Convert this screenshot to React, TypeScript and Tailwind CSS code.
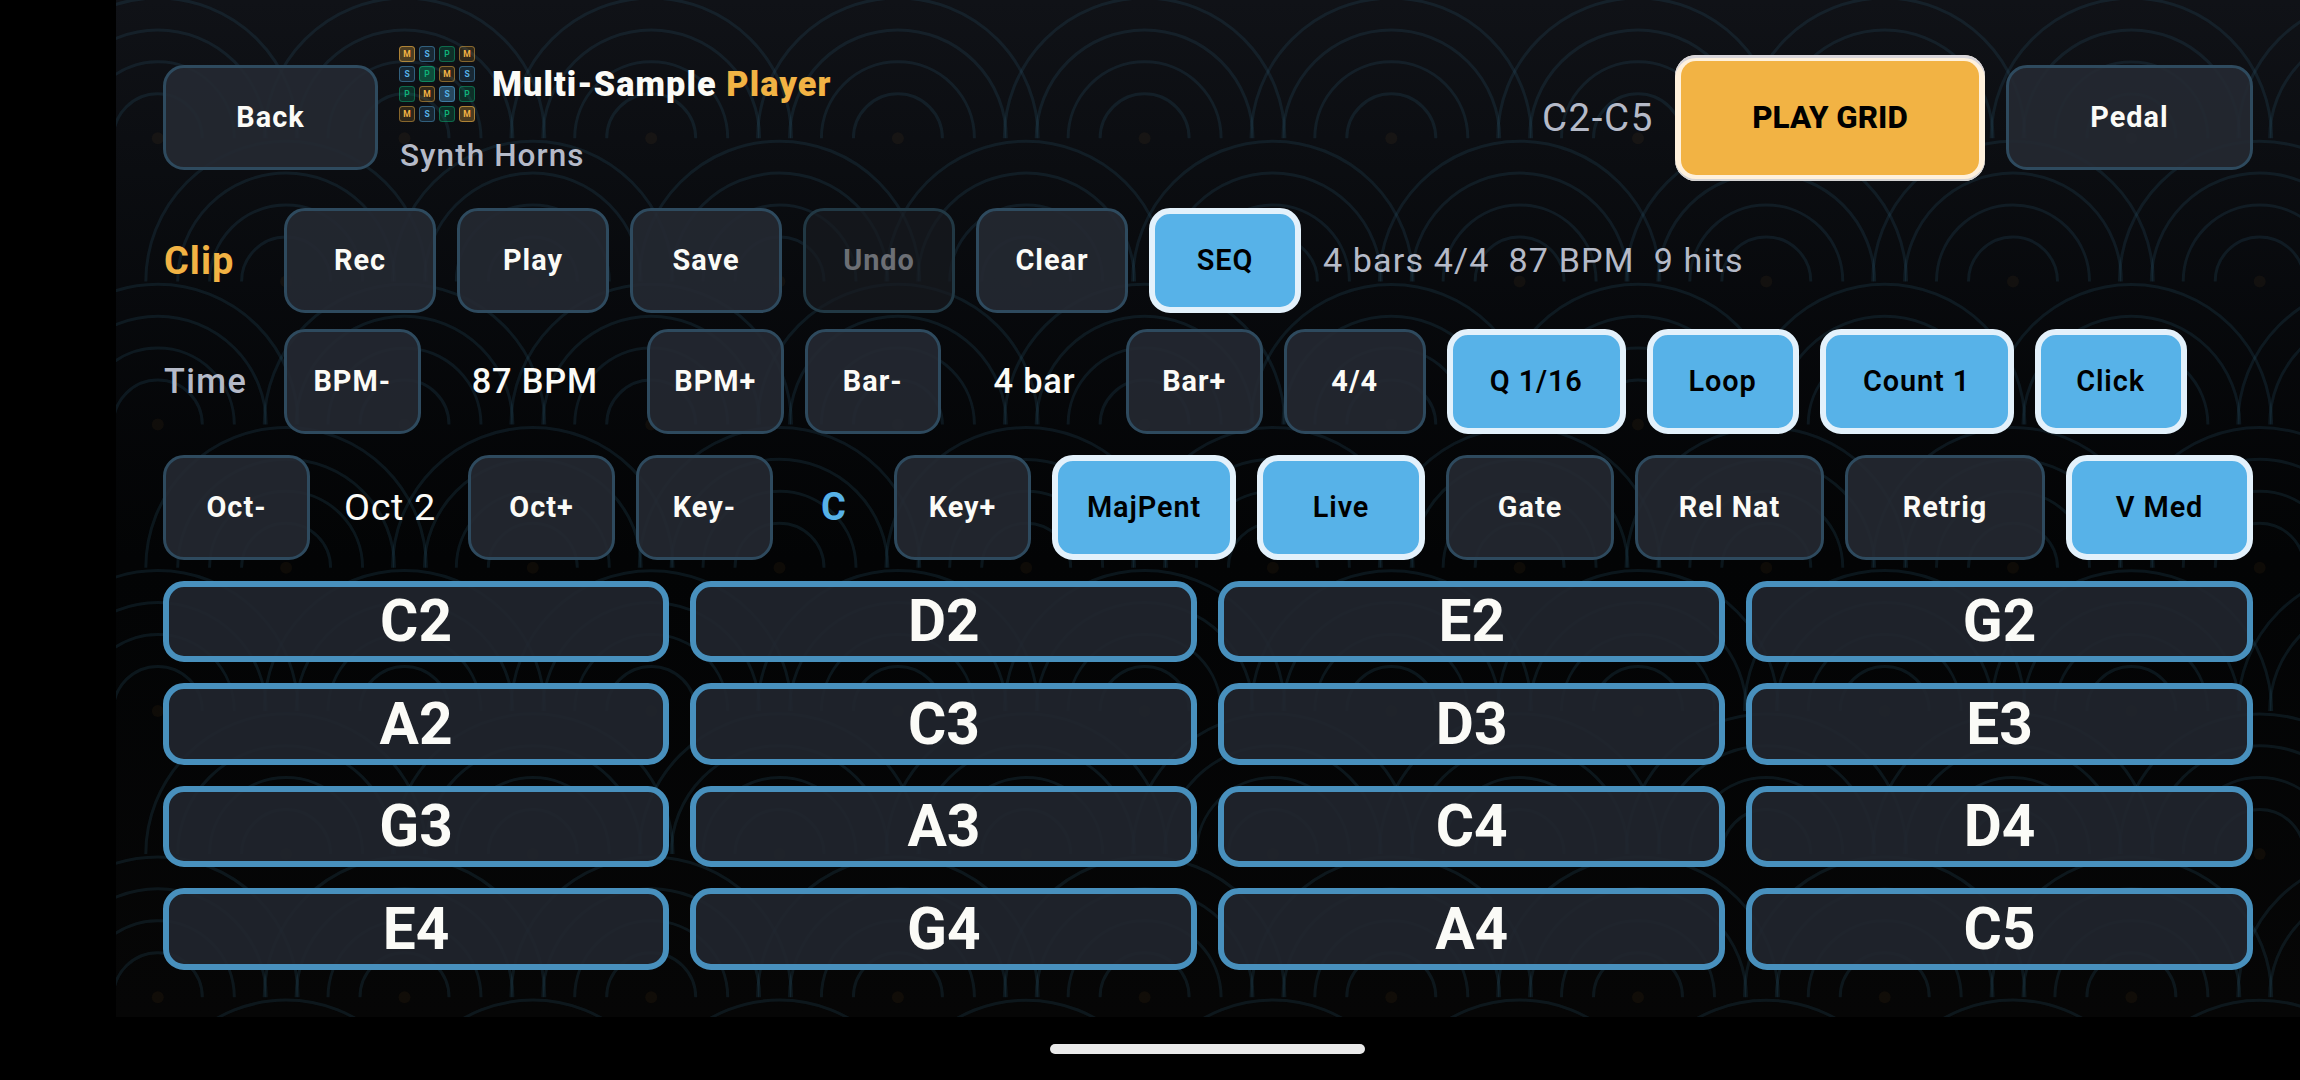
import React from "react";
import clsx from "clsx";

type Variant = "default" | "active" | "disabled";

interface PadButtonProps {
  label: string;
  width: string;
  variant?: Variant;
}

const variantClasses: Record<Variant, string> = {
  default:
    "border-[3px] border-[#2e4a5e] bg-[#252932]/90 font-bold tracking-[1px] text-[#fbfbf7]",
  active:
    "border-[6px] border-[#e3f1fb] bg-[#57b2e8] font-semibold tracking-[0.9px] text-black",
  disabled:
    "border-[3px] border-[#213844] bg-[#181b21]/70 font-bold tracking-[1px] text-[#6c6f75]",
};

const PadButton: React.FC<PadButtonProps> = ({
  label,
  width,
  variant = "default",
}) => (
  <button
    className={clsx(
      "flex h-[105px] shrink-0 items-center justify-center rounded-[21px] pt-px text-[28.875px] whitespace-nowrap",
      width,
      variantClasses[variant]
    )}
  >
    {label}
  </button>
);

// Background wave pattern: staggered rows of half circles with a dot in the middle
const ROW_HEIGHT = 143.15;
const COL_WIDTH = 246.7;
const RADII = [44.5, 76.5, 108.4, 140.3];

const WavePattern: React.FC = () => {
  const centers: { x: number; y: number }[] = [];
  for (let row = 0; row < 8; row++) {
    const offset = row % 2 === 0 ? 41.8 : 170.1;
    for (let col = 0; col < 10; col++) {
      centers.push({ x: offset + col * COL_WIDTH, y: 138.3 + row * ROW_HEIGHT });
    }
  }

  return (
    <svg
      className="absolute inset-0"
      width="2184"
      height="1017"
      viewBox="0 0 2184 1017"
      fill="none"
    >
      {centers.map(({ x, y }) => (
        <g key={`${x}-${y}`}>
          {RADII.map((r) => (
            <path
              key={r}
              d={`M${x - r} ${y}A${r} ${r} 0 0 1 ${x + r} ${y}`}
              stroke="#2f6078"
              strokeOpacity="0.2"
              strokeWidth="3"
            />
          ))}
          <circle cx={x} cy={y} r="6" fill="#f2a044" fillOpacity="0.05" />
        </g>
      ))}
    </svg>
  );
};

const tileClasses: Record<string, string> = {
  M: "border-[#f2b344]/45 bg-[#f2b344]/15 text-[#f2b344]",
  S: "border-[#57b2e8]/40 bg-[#57b2e8]/15 text-[#57b2e8]",
  P: "border-[#10b178]/45 bg-[#10b178]/20 text-[#10b178]",
};

const brightTileClasses: Record<string, string> = {
  M: "border-[#f2b344]/60 bg-[#f2b344]/28 text-[#f2b344]",
  S: "border-[#57b2e8]/50 bg-[#57b2e8]/35 text-[#57b2e8]",
  P: "border-[#10b178]/60 bg-[#10b178]/38 text-[#10b178]",
};

const LOGO_TILES = ["MSPM", "SPMS", "PMSP", "MSPM"];

const Logo: React.FC = () => (
  <div className="grid grid-cols-4 gap-1">
    {LOGO_TILES.map((line, row) =>
      line.split("").map((letter, col) => (
        <span
          key={`${row}-${col}`}
          className={clsx(
            "flex size-4 items-center justify-center rounded-[3.5px] border text-[8.5px] leading-none font-bold",
            row === col ? brightTileClasses[letter] : tileClasses[letter]
          )}
        >
          {letter}
        </span>
      ))
    )}
  </div>
);

const NOTES = [
  "C2", "D2", "E2", "G2",
  "A2", "C3", "D3", "E3",
  "G3", "A3", "C4", "D4",
  "E4", "G4", "A4", "C5",
];

const App: React.FC = () => {
  return (
    <div className="h-[1080px] w-[2300px] overflow-hidden bg-black pl-[116px] font-['Roboto',sans-serif]">
      <div className="relative h-[1017px] overflow-hidden bg-linear-to-b from-[#101217] via-[#030405] via-55% to-[#060606]">
        <WavePattern />

        <div className="relative flex h-full flex-col px-[47px] pt-[46px] pb-[47.5px]">
          {/* Header */}
          <div className="flex h-[143px] items-center gap-[21px]">
            <PadButton label="Back" width="w-[215px]" />
            <div className="self-start">
              <div className="flex items-center gap-[17px]">
                <Logo />
                <h1 className="text-[34.2px] leading-[40px] font-black tracking-[1.1px] text-[#fbfbf7]">
                  Multi-Sample <span className="text-[#f2b344]">Player</span>
                </h1>
              </div>
              <p className="mt-4 pl-px text-[31.5px] leading-9 font-medium tracking-[1.05px] text-[#b5bac8]">
                Synth Horns
              </p>
            </div>
            <div className="ml-auto flex items-center gap-[21px]">
              <span className="text-[38.5px] tracking-[1.6px] text-[#b5bac8]">
                C2-C5
              </span>
              <button className="h-[126px] w-[310px] rounded-[21px] bg-[#fff1dc] p-1.5 shadow-[inset_0_3px_0_#d8d5da,inset_0_-2px_0_#d4d3d3]">
                <span className="flex h-full items-center justify-center rounded-[15px] bg-[#f2b344] pt-px text-[31.4px] font-extrabold text-black">
                  PLAY GRID
                </span>
              </button>
              <PadButton label="Pedal" width="w-[247px]" />
            </div>
          </div>

          {/* Clip */}
          <div className="mt-[19px] flex items-center gap-[21px]">
            <span className="w-[100px] pt-px pl-px text-[38px] font-bold tracking-[1px] text-[#f2b344]">
              Clip
            </span>
            <PadButton label="Rec" width="w-[152px]" />
            <PadButton label="Play" width="w-[152px]" />
            <PadButton label="Save" width="w-[152px]" />
            <PadButton label="Undo" width="w-[152px]" variant="disabled" />
            <PadButton label="Clear" width="w-[152px]" />
            <PadButton label="SEQ" width="w-[152px]" variant="active" />
            <span className="pl-px text-[34.1px] tracking-[1.12px] whitespace-pre text-[#b5bac8]">
              {"4 bars 4/4  87 BPM  9 hits"}
            </span>
          </div>

          {/* Time */}
          <div className="mt-4 flex items-center gap-[21px]">
            <span className="w-[100px] pl-px text-[34.2px] font-medium tracking-[1.4px] text-[#b5bac8]">
              Time
            </span>
            <PadButton label="BPM-" width="w-[136.5px]" />
            <span className="w-[184.5px] pl-0.5 text-center text-[34.4px] font-medium tracking-[0.8px] text-[#fbfbf7]">
              87 BPM
            </span>
            <PadButton label="BPM+" width="w-[136.5px]" />
            <PadButton label="Bar-" width="w-[136.5px]" />
            <span className="w-[143px] pl-0.5 text-center text-[34.4px] font-medium tracking-[0.8px] text-[#fbfbf7]">
              4 bar
            </span>
            <PadButton label="Bar+" width="w-[136.5px]" />
            <PadButton label="4/4" width="w-[142.5px]" />
            <PadButton label="Q 1/16" width="w-[178.5px]" variant="active" />
            <PadButton label="Loop" width="w-[152px]" variant="active" />
            <PadButton label="Count 1" width="w-[194px]" variant="active" />
            <PadButton label="Click" width="w-[152px]" variant="active" />
          </div>

          {/* Octave, key and voice options */}
          <div className="mt-[21px] flex items-center gap-[21px]">
            <PadButton label="Oct-" width="w-[147px]" />
            <span className="w-[116px] pl-0.5 text-center text-[37.8px] tracking-[0.6px] text-[#fbfbf7]">
              Oct 2
            </span>
            <PadButton label="Oct+" width="w-[147px]" />
            <PadButton label="Key-" width="w-[137px]" />
            <span className="w-[79px] text-center text-[38px] font-bold text-[#57b2e8]">
              C
            </span>
            <PadButton label="Key+" width="w-[137px]" />
            <PadButton label="MajPent" width="w-[184px]" variant="active" />
            <PadButton label="Live" width="w-[168px]" variant="active" />
            <PadButton label="Gate" width="w-[168px]" />
            <PadButton label="Rel Nat" width="w-[189px]" />
            <PadButton label="Retrig" width="w-[200px]" />
            <PadButton label="V Med" width="w-[187px]" variant="active" />
          </div>

          {/* Note grid */}
          <div className="mt-[21px] -ml-[0.4px] grid flex-1 grid-cols-4 grid-rows-4 gap-[21px]">
            {NOTES.map((note) => (
              <button
                key={note}
                className="flex min-h-0 items-center justify-center rounded-[21px] border-[6px] border-[#4890bd] bg-[#21262f]/90 text-[58.6px] leading-none font-bold text-[#fbfbf7]"
              >
                {note}
              </button>
            ))}
          </div>
        </div>
      </div>

      {/* Gesture bar */}
      <div className="mt-[27px] ml-[934px] h-2.5 w-[315px] rounded-[5px] bg-[#eaeaea]" />
    </div>
  );
};

export default App;
